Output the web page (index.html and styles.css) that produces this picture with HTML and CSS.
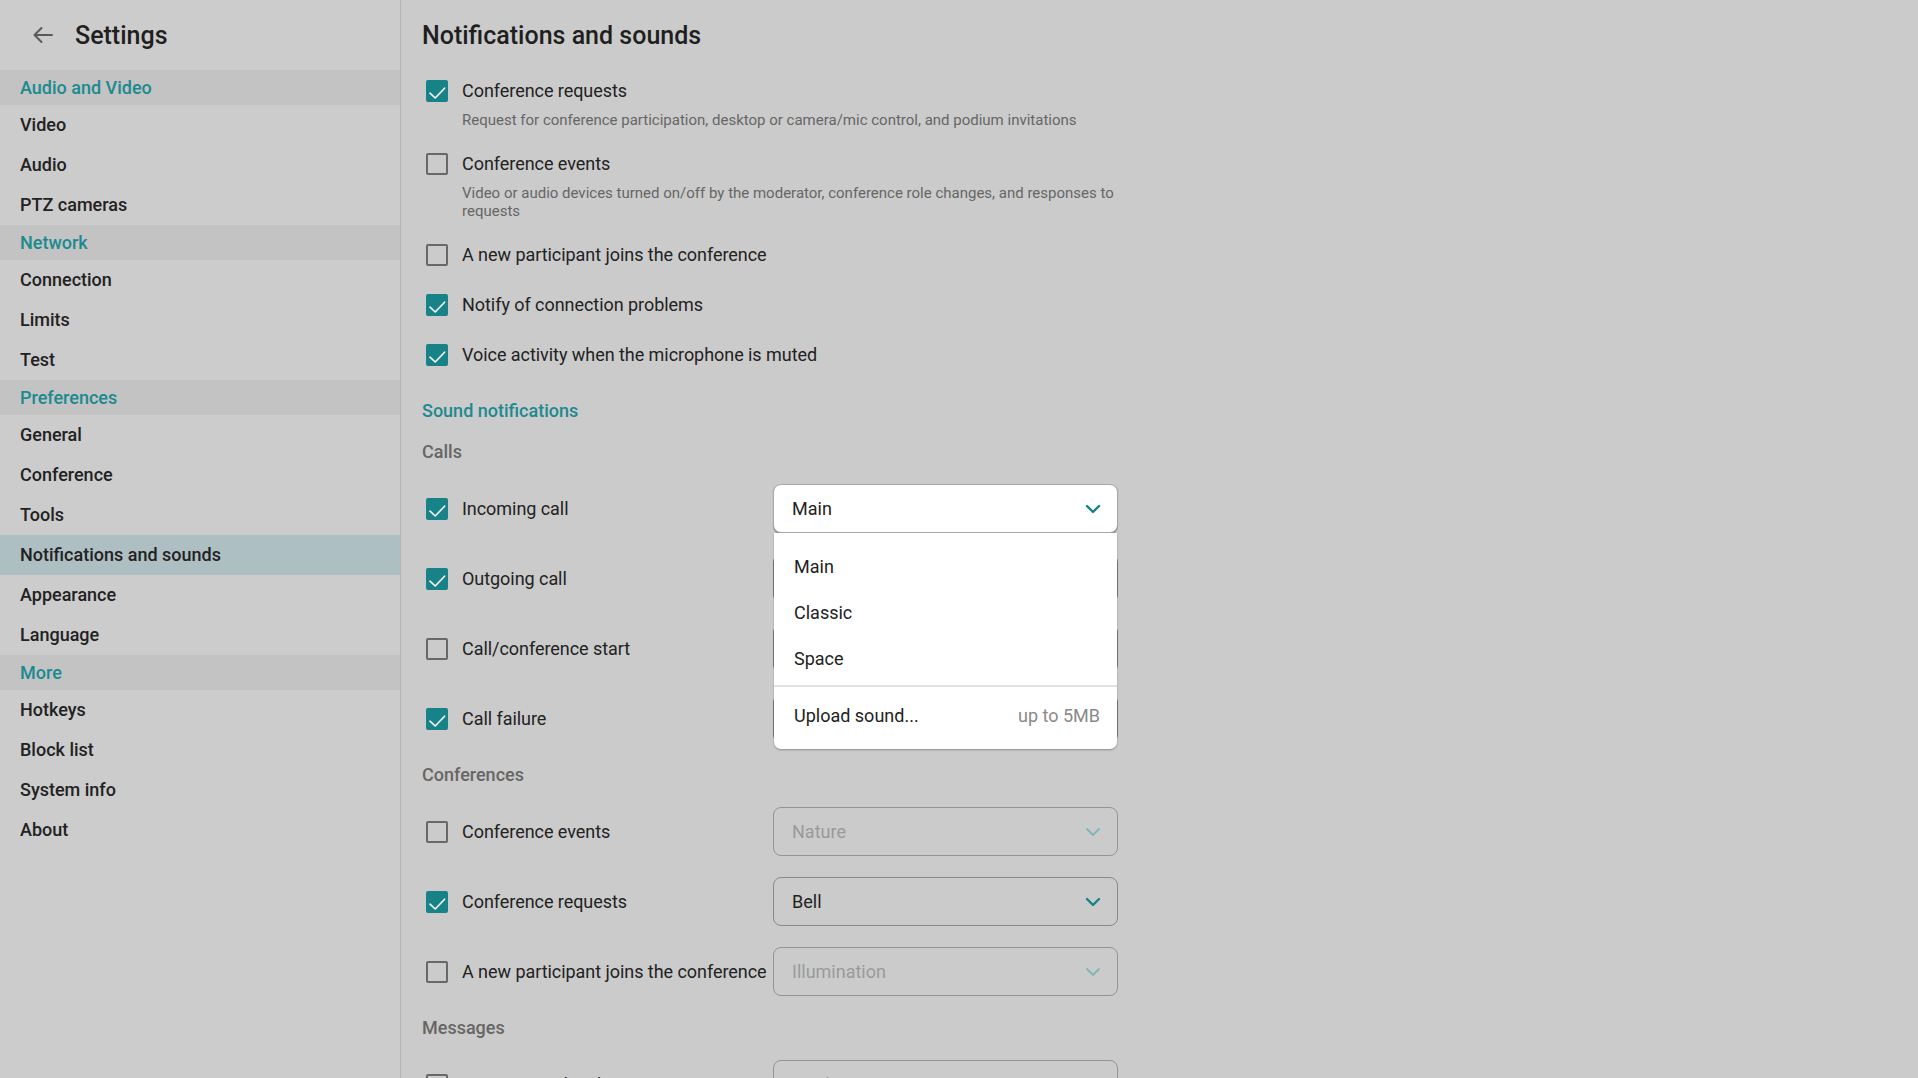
FILE: index.html
```html
<!DOCTYPE html>
<html lang="en">
<head>
<meta charset="utf-8">
<title>Settings</title>
<link rel="stylesheet" href="styles.css">
</head>
<body>
<aside class="sidebar">
  <div class="side-head">
    <svg class="back" width="22" height="18" viewBox="0 0 22 18"><path d="M20 9H2.5M9.5 2L2.5 9L9.5 16" fill="none" stroke="#5a5a5a" stroke-width="2" stroke-linecap="round" stroke-linejoin="round"/></svg>
    <h1 class="side-title">Settings</h1>
  </div>
  <nav class="nav">
    <div class="group">Audio and Video</div>
    <div class="item">Video</div>
    <div class="item">Audio</div>
    <div class="item">PTZ cameras</div>
    <div class="group">Network</div>
    <div class="item">Connection</div>
    <div class="item">Limits</div>
    <div class="item">Test</div>
    <div class="group">Preferences</div>
    <div class="item">General</div>
    <div class="item">Conference</div>
    <div class="item">Tools</div>
    <div class="item active">Notifications and sounds</div>
    <div class="item">Appearance</div>
    <div class="item">Language</div>
    <div class="group">More</div>
    <div class="item">Hotkeys</div>
    <div class="item">Block list</div>
    <div class="item">System info</div>
    <div class="item">About</div>
  </nav>
</aside>

<main class="content">
  <h2 class="title">Notifications and sounds</h2>

  <div class="opts">
    <div class="opt">
      <div class="check-line"><span class="cb on"><svg viewBox="0 0 22 22"><path d="M4 13.2L9.2 18L18.6 8.2" /></svg></span><span class="lbl">Conference requests</span></div>
      <p class="desc">Request for conference participation, desktop or camera/mic control, and podium invitations</p>
    </div>
    <div class="opt">
      <div class="check-line"><span class="cb"></span><span class="lbl">Conference events</span></div>
      <p class="desc">Video or audio devices turned on/off by the moderator, conference role changes, and responses to requests</p>
    </div>
    <div class="opt">
      <div class="check-line"><span class="cb"></span><span class="lbl">A new participant joins the conference</span></div>
    </div>
    <div class="opt">
      <div class="check-line"><span class="cb on"><svg viewBox="0 0 22 22"><path d="M4 13.2L9.2 18L18.6 8.2" /></svg></span><span class="lbl">Notify of connection problems</span></div>
    </div>
    <div class="opt">
      <div class="check-line"><span class="cb on"><svg viewBox="0 0 22 22"><path d="M4 13.2L9.2 18L18.6 8.2" /></svg></span><span class="lbl">Voice activity when the microphone is muted</span></div>
    </div>
  </div>

  <section class="sound">
    <h3 class="sec-title">Sound notifications</h3>
    <div class="sub">Calls</div>

    <div class="srow">
      <div class="check-line"><span class="cb on"><svg viewBox="0 0 22 22"><path d="M4 13.2L9.2 18L18.6 8.2" /></svg></span><span class="lbl">Incoming call</span></div>
      <div class="sel-wrap">
        <div class="select open"><span>Main</span><svg class="chev" viewBox="0 0 16 10"><path d="M2 2L8 8L14 2"/></svg></div>
        <div class="menu">
          <div class="mi">Main</div>
          <div class="mi">Classic</div>
          <div class="mi">Space</div>
          <div class="menu-sep"></div>
          <div class="mi upload"><span>Upload sound...</span><span class="hint">up to 5MB</span></div>
        </div>
      </div>
    </div>

    <div class="srow">
      <div class="check-line"><span class="cb on"><svg viewBox="0 0 22 22"><path d="M4 13.2L9.2 18L18.6 8.2" /></svg></span><span class="lbl">Outgoing call</span></div>
      <div class="select covered"></div>
    </div>

    <div class="srow">
      <div class="check-line"><span class="cb"></span><span class="lbl">Call/conference start</span></div>
      <div class="select covered"></div>
    </div>

    <div class="srow">
      <div class="check-line"><span class="cb on"><svg viewBox="0 0 22 22"><path d="M4 13.2L9.2 18L18.6 8.2" /></svg></span><span class="lbl">Call failure</span></div>
      <div class="select covered"></div>
    </div>

    <div class="sub">Conferences</div>

    <div class="srow">
      <div class="check-line"><span class="cb"></span><span class="lbl">Conference events</span></div>
      <div class="select disabled"><span>Nature</span><svg class="chev" viewBox="0 0 16 10"><path d="M2 2L8 8L14 2"/></svg></div>
    </div>

    <div class="srow">
      <div class="check-line"><span class="cb on"><svg viewBox="0 0 22 22"><path d="M4 13.2L9.2 18L18.6 8.2" /></svg></span><span class="lbl">Conference requests</span></div>
      <div class="select"><span>Bell</span><svg class="chev" viewBox="0 0 16 10"><path d="M2 2L8 8L14 2"/></svg></div>
    </div>

    <div class="srow">
      <div class="check-line"><span class="cb"></span><span class="lbl">A new participant joins the conference</span></div>
      <div class="select disabled"><span>Illumination</span><svg class="chev" viewBox="0 0 16 10"><path d="M2 2L8 8L14 2"/></svg></div>
    </div>

    <div class="sub">Messages</div>

    <div class="srow">
      <div class="check-line"><span class="cb"></span><span class="lbl">Message in the chat</span></div>
      <div class="select disabled"><span>Bottle</span><svg class="chev" viewBox="0 0 16 10"><path d="M2 2L8 8L14 2"/></svg></div>
    </div>
  </section>
</main>
</body>
</html>
```

FILE: styles.css
```css
* { box-sizing: border-box; }

html, body {
  margin: 0;
  height: 100%;
  overflow: hidden;
}

body {
  display: flex;
  background: #cbcbcb;
  font-family: Roboto, "Liberation Sans", Arial, sans-serif;
  color: #222222;
}

/* ---------- sidebar ---------- */
.sidebar {
  width: 401px;
  flex: none;
  border-right: 1px solid #b4b4b4;
  background: #cccccc;
  height: 100%;
}

.side-head {
  height: 70px;
  display: flex;
  align-items: center;
  padding-left: 32px;
  gap: 21px;
}

.back { display: block; }

.side-title {
  margin: 0;
  font-size: 25px;
  font-weight: 500;
  color: #1f1f1f;
}

.nav { display: flex; flex-direction: column; }

.group {
  height: 35px;
  line-height: 35px;
  padding-left: 20px;
  background: #c3c3c3;
  color: #1b8a8f;
  font-size: 18px;
  font-weight: 500;
}

.item {
  height: 40px;
  line-height: 40px;
  padding-left: 20px;
  font-size: 18px;
  font-weight: 500;
  color: #222222;
}

.item.active { background: #adbfc2; }

/* ---------- content ---------- */
.content {
  flex: 1;
  min-width: 0;
  height: 100%;
  overflow: hidden;
  padding-left: 21px;
  display: flex;
  flex-direction: column;
}

.title {
  margin: 0;
  height: 70px;
  flex: none;
  display: flex;
  align-items: center;
  font-size: 25px;
  font-weight: 500;
  color: #1f1f1f;
}

.opts {
  width: 696px;
  margin-top: 10px;
  display: flex;
  flex-direction: column;
  gap: 28px;
}

.check-line {
  display: flex;
  align-items: center;
  gap: 14px;
  margin-left: 4px;
  height: 22px;
}

.cb {
  width: 22px;
  height: 22px;
  flex: none;
  border: 2px solid #686868;
  border-radius: 2px;
  display: block;
}

.cb.on {
  background: #178288;
  border-color: #178288;
  position: relative;
}

.cb svg {
  position: absolute;
  left: -2px;
  top: -2px;
  width: 22px;
  height: 22px;
}

.cb svg path {
  fill: none;
  stroke: #ffffff;
  stroke-width: 1.6;
  stroke-linecap: round;
  stroke-linejoin: round;
}

.lbl {
  font-size: 18px;
  line-height: 22px;
  white-space: nowrap;
  color: #222222;
  letter-spacing: -0.05px;
}

.desc {
  margin: 9px 0 -4px 40px;
  font-size: 15px;
  line-height: 18px;
  color: #666666;
}

/* ---------- sound section ---------- */
.sound {
  width: 696px;
  margin-top: 34px;
  display: flex;
  flex-direction: column;
  gap: 21px;
  flex: none;
}

.sec-title {
  margin: 0 0 -2px;
  font-size: 18px;
  line-height: 22px;
  font-weight: 500;
  color: #1b8a8f;
}

.sub {
  font-size: 18px;
  line-height: 22px;
  font-weight: 500;
  color: #666666;
}

.srow {
  display: grid;
  grid-template-columns: 351px 345px;
  align-items: center;
  height: 49px;
}

.sel-wrap { position: relative; }

.select {
  height: 49px;
  border: 1px solid #8a8a8a;
  border-radius: 8px;
  padding: 0 16px 0 18px;
  display: flex;
  align-items: center;
  justify-content: space-between;
  font-size: 18px;
  color: #222222;
}

.select.covered { border-color: #7a7a7a; }

.chev {
  width: 16px;
  height: 10px;
}

.chev path {
  fill: none;
  stroke: #178288;
  stroke-width: 2.4;
  stroke-linecap: round;
  stroke-linejoin: round;
}

.select.disabled {
  color: #9a9a9a;
  border-color: #949494;
}

.select.disabled .chev path {
  stroke: #7fb6b9;
  stroke-width: 1.8;
}

.select.open {
  background: #ffffff;
  border-color: #a9a9a9;
  box-shadow: 0 1px 1px rgba(0, 0, 0, 0.35);
}

.menu {
  position: absolute;
  top: 100%;
  left: 1px;
  right: 1px;
  z-index: 10;
  background: #ffffff;
  border-radius: 0 0 7px 7px;
  padding: 10px 0 6px;
  box-shadow: 0 1px 2px rgba(0, 0, 0, 0.3);
}

.mi {
  height: 46px;
  display: flex;
  align-items: center;
  padding: 0 17px 0 20px;
  font-size: 18px;
  color: #222222;
}

.menu-sep {
  height: 2px;
  margin: 4px 0 0;
  background: #e1e1e1;
}

.mi.upload {
  height: 56px;
  justify-content: space-between;
}

.hint { color: #8a8a8a; }
```
